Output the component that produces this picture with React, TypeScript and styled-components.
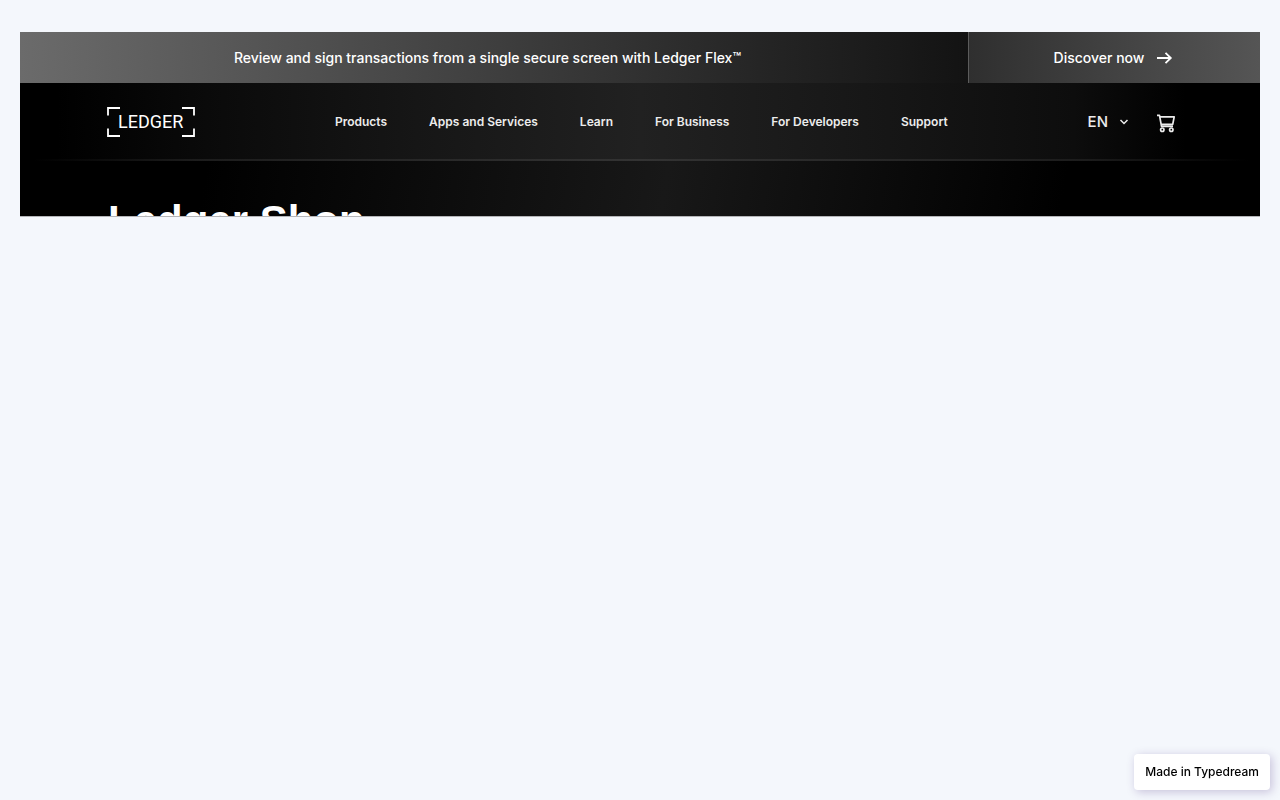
import React from "react";
import styled, { createGlobalStyle } from "styled-components";

const GlobalStyle = createGlobalStyle`
  *, *::before, *::after { box-sizing: border-box; }
  body {
    margin: 0;
    background: #f4f7fc;
    font-family: Inter, "Liberation Sans", sans-serif;
  }
`;

const Page = styled.main`
  padding: 32px 20px;
`;

const Panel = styled.section`
  overflow: hidden;
  background: #000;
  color: #fff;
  border-bottom: 1px solid #b4b5b8;
`;

const Banner = styled.div`
  display: grid;
  grid-template-columns: 948fr 292fr;
  height: 51px;
  font-size: 14px;
  font-weight: 500;
  line-height: 20px;
`;

const BannerText = styled.p`
  display: flex;
  align-items: center;
  justify-content: center;
  margin: 0;
  padding-right: 13px;
  background: linear-gradient(90deg, #6b6b6b, #434343 45%, #252525 78%, #131313);
`;

const BannerLink = styled.a`
  display: flex;
  align-items: center;
  justify-content: center;
  gap: 12px;
  padding-right: 2px;
  border-left: 1px solid #5c5c5c;
  background: linear-gradient(90deg, #2f2f2f, #555);
  color: inherit;
  text-decoration: none;
`;

const Header = styled.header`
  display: flex;
  align-items: center;
  justify-content: space-between;
  height: 76px;
  padding: 2px 84px 0 87px;
  background: linear-gradient(90deg, #000 3%, #0a0a0a 15%, #161616 32%, #212121 50%, #161616 70%, #0d0d0d 85%, #000 94%);
`;

const LogoLink = styled.a`
  display: flex;
  color: inherit;
`;

const Nav = styled.nav`
  display: flex;
  gap: 42px;
`;

const NavLink = styled.a`
  color: #ececec;
  font-size: 12px;
  font-weight: 600;
  line-height: 20px;
  text-decoration: none;
`;

const Tools = styled.div`
  display: flex;
  align-items: center;
  gap: 26px;
`;

const IconButton = styled.button`
  display: flex;
  align-items: center;
  gap: 10px;
  padding: 0;
  border: 0;
  background: none;
  color: #ececec;
  font: 500 15px/20px Inter, "Liberation Sans", sans-serif;
  cursor: pointer;
`;

const Divider = styled.hr`
  height: 2px;
  margin: 0;
  border: 0;
  background: linear-gradient(90deg, #000 1%, #1c1c1c 14%, #333 50%, #1c1c1c 86%, #000 99%);
`;

const Hero = styled.div`
  height: 55px;
  padding: 34px 88px 0;
  overflow: hidden;
  background: linear-gradient(100deg, #000 15%, #181818 52%, #000 84%);
`;

const Title = styled.h1`
  margin: 0;
  font-family: "Liberation Sans", Arial, sans-serif;
  font-size: 42px;
  font-weight: 700;
  line-height: 52px;
`;

const MadeIn = styled.a`
  position: fixed;
  right: 10px;
  bottom: 10px;
  padding: 8px 11px;
  border-radius: 4px;
  background: #fff;
  box-shadow: 2px 2px 10px rgba(62, 33, 118, 0.25);
  color: #000;
  font-size: 12px;
  font-weight: 500;
  line-height: 20px;
  text-decoration: none;
`;

const links = ["Products", "Apps and Services", "Learn", "For Business", "For Developers", "Support"];

const Logo = () => (
  <svg width="88" height="30" viewBox="0 0 88 30" role="img" aria-label="Ledger">
    <path
      d="M1 8.5V1h12M75 1h12v7.500M1 21.500V29h12M75 29h12v-7.500"
      fill="none"
      stroke="#fff"
      strokeWidth="1.800"
    />
    <text x="11" y="21" fill="#fff" fontFamily="Roboto, sans-serif" fontSize="18">
      LEDGER
    </text>
  </svg>
);

const Arrow = () => (
  <svg width="17" height="14" viewBox="0 0 17 14" fill="none" stroke="currentColor" strokeWidth="1.800" aria-hidden="true">
    <path d="M1 7h14M9.500 1.800L14.800 7L9.500 12.200" />
  </svg>
);

const Chevron = () => (
  <svg width="12" height="12" viewBox="0 0 12 12" fill="none" stroke="currentColor" strokeWidth="1.500" aria-hidden="true">
    <path d="M2.500 4L6 7.500L9.500 4" />
  </svg>
);

const Cart = () => (
  <svg width="20" height="22" viewBox="0 0 20 22" fill="none" stroke="currentColor" strokeWidth="1.700" strokeLinejoin="round" aria-hidden="true">
    <path d="M1 4.300h2.500l2 11h11.500M3.900 5.800h14.300l-1.500 7.500H5.300" />
    <circle cx="6.300" cy="18.700" r="1.700" />
    <circle cx="15.300" cy="18.700" r="1.700" />
  </svg>
);

export default function App() {
  return (
    <>
      <GlobalStyle />
      <Page>
        <Panel>
          <Banner>
            <BannerText>Review and sign transactions from a single secure screen with Ledger Flex™</BannerText>
            <BannerLink href="#discover">
              Discover now
              <Arrow />
            </BannerLink>
          </Banner>
          <Header>
            <LogoLink href="#home">
              <Logo />
            </LogoLink>
            <Nav aria-label="Main">
              {links.map((label) => (
                <NavLink key={label} href="#nav">
                  {label}
                </NavLink>
              ))}
            </Nav>
            <Tools>
              <IconButton type="button" aria-haspopup="listbox">
                EN
                <Chevron />
              </IconButton>
              <IconButton type="button" aria-label="Cart">
                <Cart />
              </IconButton>
            </Tools>
          </Header>
          <Divider />
          <Hero>
            <Title>Ledger Shop</Title>
          </Hero>
        </Panel>
      </Page>
      <MadeIn href="#typedream">Made in Typedream</MadeIn>
    </>
  );
}
